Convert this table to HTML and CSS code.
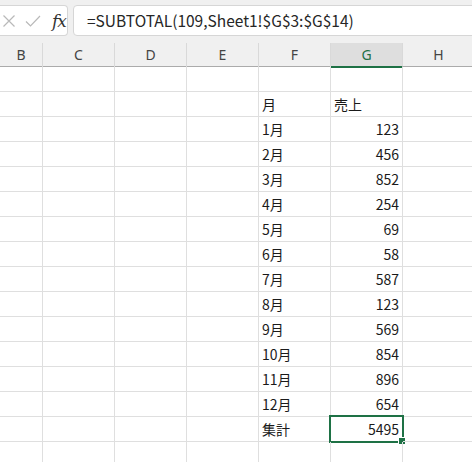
FILE: index.html
```html
<!DOCTYPE html>
<html lang="ja">
<head>
<meta charset="utf-8">
<link rel="stylesheet" href="styles.css">
</head>
<body>
<div class="app">
  <div class="toolbar">
    <div class="iconbox">
      <svg class="ic" width="14" height="14" viewBox="0 0 14 14"><path d="M1.5 1.5 L12.5 12.5 M12.5 1.5 L1.5 12.5" stroke="#b9b9b9" stroke-width="1.2" fill="none"/></svg>
      <svg class="ic" width="16" height="14" viewBox="0 0 16 14"><path d="M1 7.5 L5.5 12 L15 2" stroke="#b9b9b9" stroke-width="1.2" fill="none"/></svg>
      <span class="fx">fx</span>
    </div>
    <div class="formula">=SUBTOTAL(109,Sheet1!$G$3:$G$14)</div>
  </div>
  <div class="grid">
    <div class="hdr">B</div><div class="hdr">C</div><div class="hdr">D</div><div class="hdr">E</div><div class="hdr">F</div><div class="hdr sel">G</div><div class="hdr">H</div>
  </div>
  <div class="sheet" id="sheet"></div>
</div>
<script src="app.js"></script>
</body>
</html>
```
FILE: app.js
```js
const rows = [
  ["", ""],
  ["月", "売上"],
  ["1月", "123"], ["2月", "456"], ["3月", "852"], ["4月", "254"], ["5月", "69"], ["6月", "58"],
  ["7月", "587"], ["8月", "123"], ["9月", "569"], ["10月", "854"], ["11月", "896"], ["12月", "654"],
  ["集計", "5495"],
  ["", ""]
];
const sheet = document.getElementById("sheet");
rows.forEach((r, i) => {
  for (let c = 0; c < 7; c++) {
    const d = document.createElement("div");
    d.className = "cell";
    if (c === 4) d.textContent = r[0];
    if (c === 5) {
      d.textContent = r[1];
      if (/^\d+$/.test(r[1])) d.classList.add("num");
      if (i === 14) {
        d.classList.add("active");
        const s = document.createElement("div");
        s.className = "selbox";
        const h = document.createElement("div");
        h.className = "handle";
        s.appendChild(h);
        d.appendChild(s);
      }
    }
    sheet.appendChild(d);
  }
});
```
FILE: styles.css
```css
html, body { margin: 0; padding: 0; background: #fff; }
body { width: 472px; height: 462px; overflow: hidden; font-family: "Noto Sans CJK JP", "Noto Sans", sans-serif; color: #222; }
.app { width: 472px; }
.toolbar {
  height: 43px; background: #f0f0f0; display: flex; align-items: flex-start;
  padding-top: 5px; box-sizing: border-box; gap: 5px;
}
.iconbox {
  width: 74px; height: 31px; box-sizing: border-box; margin-left: -6px;
  background: #fff; border: 1px solid #d6d6d6; border-left: none; border-radius: 0 4px 4px 0;
  display: flex; align-items: center; padding-left: 8px;
}
.ic { display: block; flex: none; }
.ic + .ic { margin-left: 9px; }
.fx { font-family: "DejaVu Serif", "Liberation Serif", serif; font-style: italic; font-size: 17px; color: #333; margin-left: 11px; letter-spacing: -1px; }
.formula {
  flex: 1; height: 31px; box-sizing: border-box; margin-right: -6px;
  background: #fff; border: 1px solid #d6d6d6; border-radius: 4px;
  font-size: 15.5px; line-height: 29px; padding-left: 13px; color: #262626; white-space: nowrap;
}
.grid, .sheet {
  display: grid; grid-template-columns: 43px repeat(5, 72px) 72px;
}
.grid { height: 24px; background: #f0f0f0; border-bottom: 1px solid #ababab; box-sizing: border-box; }
.hdr {
  border-right: 1px solid #d9d9d9; text-align: center; font-size: 14px; line-height: 23px; color: #444;
  font-family: "Noto Sans", sans-serif;
}
.hdr.sel { background: #dedede; border-bottom: 2px solid #1e7145; color: #1e7145; line-height: 23px; }
.cell {
  height: 25px; box-sizing: border-box; border-right: 1px solid #dfdfdf; border-bottom: 1px solid #dfdfdf;
  font-size: 14px; line-height: 24px; padding: 0 3px; white-space: nowrap; position: relative; color: #1a1a1a;
}
.cell.num { text-align: right; }
.selbox {
  position: absolute; left: -2px; top: -2px; right: -2px; bottom: -2px;
  border: 2px solid #1e7145; pointer-events: none;
}
.handle {
  position: absolute; right: -4px; bottom: -4px; width: 6px; height: 6px; background: #1e7145; border: 1px solid #fff;
}
```
